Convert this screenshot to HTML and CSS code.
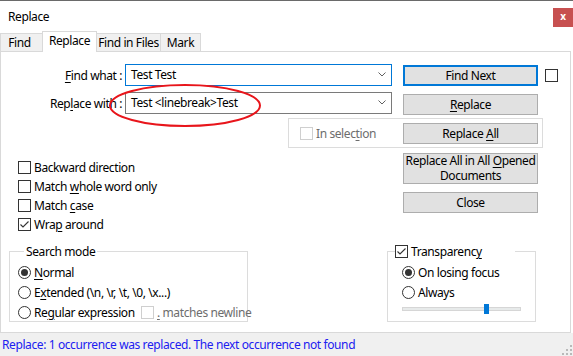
FILE: index.html
```html
<!DOCTYPE html>
<html lang="en">
<head>
  <meta charset="UTF-8">
  <title>Replace</title>
  <link rel="stylesheet" href="styles.css">
</head>
<body>
<div class="dialog">
  <div class="titlebar">
    <span class="title">Replace</span>
    <span class="close">x</span>
  </div>
  <div class="tabs">
    <span class="tab tab-find">Find</span>
    <span class="tab tab-replace active">Replace</span>
    <span class="tab tab-files">Find in Files</span>
    <span class="tab tab-mark">Mark</span>
  </div>
  <div class="panel">
    <div class="top">
      <div class="fields">
        <div class="field">
          <label><u>F</u>ind what :</label>
          <div class="combo focus">
            <span>Test Test</span>
            <svg class="chev" width="8" height="5" viewBox="0 0 8 5"><path d="M0.5 0.5 L4 4 L7.5 0.5" fill="none" stroke="#606060"/></svg>
          </div>
        </div>
        <div class="field">
          <label>Rep<u>l</u>ace with :</label>
          <div class="combo">
            <span>Test &lt;linebreak&gt;Test</span>
            <svg class="chev" width="8" height="5" viewBox="0 0 8 5"><path d="M0.5 0.5 L4 4 L7.5 0.5" fill="none" stroke="#606060"/></svg>
          </div>
        </div>
      </div>
      <div class="actions">
        <span class="btn default"><span>Find Next</span></span>
        <span class="btn"><span><u>R</u>eplace</span></span>
      </div>
      <span class="box top-box"></span>
    </div>

    <div class="selection">
      <span class="box disabled"></span>
      <span class="muted">In selec<u>t</u>ion</span>
      <span class="btn"><span>Replace <u>A</u>ll</span></span>
    </div>

    <div class="middle">
      <div class="options">
        <div class="opt"><span class="box"></span><span>Backward direction</span></div>
        <div class="opt"><span class="box"></span><span>Match <u>w</u>hole word only</span></div>
        <div class="opt"><span class="box"></span><span>Match <u>c</u>ase</span></div>
        <div class="opt"><span class="box checked"><svg width="11" height="11" viewBox="0 0 11 11"><path d="M1.5 5.5 L4 8 L9.5 2.5" fill="none" stroke="#333" stroke-width="1.1"/></svg></span><span>Wra<u>p</u> around</span></div>
      </div>
      <div class="more">
        <span class="btn tall"><span>Replace All in All <u>O</u>pened<br>Documents</span></span>
        <span class="btn"><span>Close</span></span>
      </div>
    </div>

    <div class="bottom">
      <fieldset class="group search">
        <legend>Search mode</legend>
        <div class="opt"><span class="radio on"></span><span><u>N</u>ormal</span></div>
        <div class="opt"><span class="radio"></span><span>E<u>x</u>tended (\n, \r, \t, \0, \x...)</span></div>
        <div class="opt"><span class="radio"></span><span class="regex">Re<u>g</u>ular expression</span><span class="box disabled"></span><span class="muted newline"><u>.</u> matches newline</span></div>
      </fieldset>
      <fieldset class="group transp">
        <legend><span class="box checked"><svg width="11" height="11" viewBox="0 0 11 11"><path d="M1.5 5.5 L4 8 L9.5 2.5" fill="none" stroke="#333" stroke-width="1.1"/></svg></span><span>Transparenc<u>y</u></span></legend>
        <div class="opt"><span class="radio on"></span><span>On losing focus</span></div>
        <div class="opt"><span class="radio"></span><span>Always</span></div>
        <div class="slider"><span class="thumb"></span></div>
      </fieldset>
    </div>

    <svg class="mark" width="154" height="46" viewBox="0 0 154 46"><ellipse cx="77" cy="22.5" rx="75" ry="20.5" fill="none" stroke="#e8151b" stroke-width="2"/></svg>
  </div>
  <div class="status">
    <span>Replace: 1 occurrence was replaced. The next occurrence not found</span>
    <svg class="grip" width="10" height="10" viewBox="0 0 10 10" fill="#b9b9b9">
      <rect x="8" y="0" width="2" height="2"/>
      <rect x="4" y="4" width="2" height="2"/><rect x="8" y="4" width="2" height="2"/>
      <rect x="0" y="8" width="2" height="2"/><rect x="4" y="8" width="2" height="2"/><rect x="8" y="8" width="2" height="2"/>
    </svg>
  </div>
</div>
</body>
</html>
```

FILE: styles.css
```css
* { box-sizing: border-box; }
body {
  margin: 0;
  background: #fff;
  font-family: "Noto Sans", "Open Sans", sans-serif;
  font-size: 12px;
  letter-spacing: -0.4px;
  color: #000;
}
u { text-decoration-thickness: 1px; text-underline-offset: 2px; }

.dialog {
  width: 573px;
  height: 356px;
  display: flex;
  flex-direction: column;
  border-top: 1px solid #6a6a6a;
}

/* title bar */
.titlebar {
  height: 30px;
  display: flex;
  align-items: flex-start;
  padding: 7px 0 0 8px;
  flex: none;
}
.title { line-height: 17px; }
.close {
  margin-left: auto;
  width: 20px; height: 19px;
  background: #c75050;
  color: #fff;
  font-weight: 700;
  font-size: 10px;
  line-height: 17px;
  text-align: center;
}

/* tabs */
.tabs {
  height: 20px;
  display: flex;
  align-items: flex-end;
  flex: none;
  position: relative;
  z-index: 1;
}
.tab {
  height: 18px;
  line-height: 17px;
  text-align: center;
  background: #f0f0f0;
  border: 1px solid #d9d9d9;
  border-bottom: none;
  margin-left: -1px;
}
.tab-find { width: 43px; margin-left: 0; padding-right: 4px; }
.tab-replace { width: 55px; }
.tab-files { width: 65px; }
.tab-mark { width: 41px; }
.tab.active {
  height: 21px;
  margin-bottom: -1px;
  background: #fff;
  line-height: 18px;
}

/* panel */
.panel {
  flex: 1;
  position: relative;
  width: 571px;
  border: 1px solid #d9d9d9;
}
.top { display: flex; align-items: flex-start; margin-top: 12px; }
.fields { width: 402px; flex: none; display: flex; flex-direction: column; gap: 6px; }
.field { display: flex; align-items: center; height: 22px; }
.field label { width: 121px; margin-right: 3px; text-align: right; }
.combo {
  width: 267px; height: 22px;
  border: 1px solid #7a7a7a;
  display: flex; align-items: center;
  padding: 0 5px 1px 5px;
}
.combo.focus { border-color: #0078d7; }
.chev { margin-left: auto; }

.actions { display: flex; flex-direction: column; gap: 8px; margin-top: 1px; }
.btn {
  width: 135px; height: 21px;
  background: #e1e1e1;
  border: 1px solid #adadad;
  display: flex; align-items: center; justify-content: center;
  text-align: center;
  line-height: 15px;
  white-space: nowrap;
}
.btn.default { border: 2px solid #0078d7; }
.btn.tall { height: 31px; line-height: 14.5px; }

.box {
  width: 13px; height: 13px;
  border: 1px solid #333;
  background: #fff;
  flex: none;
  display: inline-flex; align-items: center; justify-content: center;
}
.box.disabled { border-color: #cfcfcf; }
.top-box { margin: 5px 0 0 7px; }
.muted { color: #6d6d6d; white-space: nowrap; }

.selection {
  margin: 3px 0 0 287px;
  width: 255px; height: 30px;
  border: 1px solid #dcdcdc;
  display: flex; align-items: center;
  padding: 0 4px 0 11px;
  gap: 3px;
}
.selection .btn { margin-left: auto; }

.middle { display: flex; margin-top: 5px; }
.options { width: 402px; flex: none; padding: 5px 0 0 17px; }
.opt { display: flex; align-items: center; gap: 3px; height: 19px; white-space: nowrap; }
.more { display: flex; flex-direction: column; gap: 8px; }

.radio {
  width: 13px; height: 13px;
  border: 1px solid #333;
  border-radius: 50%;
  flex: none;
  display: inline-flex; align-items: center; justify-content: center;
}
.radio.on::after {
  content: "";
  width: 7px; height: 7px;
  border-radius: 50%;
  background: #333;
}

/* bottom group boxes */
.bottom { display: flex; align-items: flex-start; margin-top: 10px; }
.group {
  margin: 0;
  padding: 0;
  min-width: 0;
  height: 78px;
  border: 1px solid #dcdcdc;
}
.group legend { padding: 0 2px; line-height: 15px; }
.group .opt { height: 20px; }
.search { width: 239px; margin-left: 8px; padding: 3px 0 0 8px; }
.search legend { margin-left: 6px; }
.regex { width: 104px; flex: none; }
.transp { width: 149px; margin-left: 139px; padding: 3px 0 0 14px; }
.transp legend {
  width: 120px;
  margin-left: -7px;
  padding: 0;
  display: flex; align-items: center; gap: 3px;
}
.slider {
  position: relative;
  width: 119px; height: 4px;
  margin-top: 5px;
  background: #e7eaea;
  border: 1px solid #d6d6d6;
}
.thumb {
  position: absolute;
  left: 81px; top: -4px;
  width: 5px; height: 10px;
  background: #0078d7;
}

.mark { position: absolute; left: 107px; top: 31px; }

/* status bar */
.status {
  height: 23px;
  flex: none;
  background: #f0f0f0;
  display: flex;
  align-items: center;
  padding-left: 2px;
  color: #2020f0;
}
.grip { align-self: flex-end; margin: 0 1px 1px auto; }
```
